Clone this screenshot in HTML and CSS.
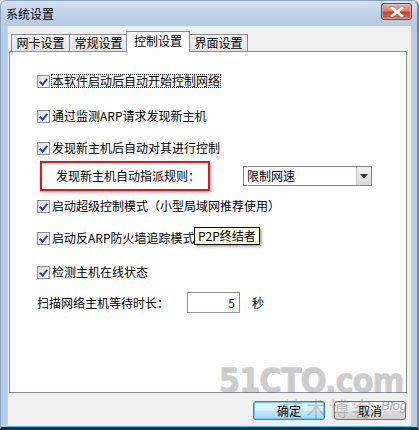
FILE: index.html
```html
<!DOCTYPE html>
<html lang="zh">
<head>
<meta charset="utf-8">
<title>系统设置</title>
<link rel="stylesheet" href="styles.css">
</head>
<body>
<div class="window">
  <div class="titlebar">
    <span class="title">系统设置</span>
    <button class="close" aria-label="关闭">
      <svg width="14" height="10" viewBox="0 0 14 10"><path d="M2 1 L12 9 M12 1 L2 9" stroke="#fff" stroke-width="2.8" stroke-linecap="square"/></svg>
    </button>
  </div>
  <div class="body">
    <div class="tabs">
      <div class="tab">网卡设置</div>
      <div class="tab">常规设置</div>
      <div class="tab active">控制设置</div>
      <div class="tab">界面设置</div>
    </div>
    <div class="panel">
      <label class="row r1"><span class="cb"></span><span class="focus">本软件启动后自动开始控制网络</span></label>
      <label class="row r2"><span class="cb"></span><span>通过监测ARP请求发现新主机</span></label>
      <label class="row r3"><span class="cb"></span><span>发现新主机后自动对其进行控制</span></label>
      <div class="rule-row">
        <div class="redbox">发现新主机自动指派规则：</div>
        <div class="select"><span>限制网速</span><span class="arrow"><svg width="8" height="5" viewBox="0 0 8 5"><path d="M0 0 H8 L4 4.5 Z" fill="#333"/></svg></span></div>
      </div>
      <label class="row r5"><span class="cb"></span><span>启动超级控制模式（小型局域网推荐使用）</span></label>
      <label class="row r6"><span class="cb"></span><span>启动反ARP防火墙追踪模式</span><span class="tooltip">P2P终结者</span></label>
      <label class="row r7"><span class="cb"></span><span>检测主机在线状态</span></label>
      <div class="scan-row">
        <span class="scan-label">扫描网络主机等待时长：</span>
        <span class="input">5</span>
        <span class="unit">秒</span>
      </div>
    </div>
    <div class="buttons">
      <button class="btn default">确定</button>
      <button class="btn">取消</button>
    </div>
    <div class="watermark">
      <div class="wm-big">51CTO.com</div>
      <div class="wm-small">技术博客<i>Blog</i></div>
    </div>
  </div>
</div>
</body>
</html>
```
FILE: styles.css
```css
* { box-sizing: border-box; }
html, body { margin: 0; padding: 0; }
body {
  width: 419px;
  height: 430px;
  overflow: hidden;
  background: #fff;
  font-family: "Noto Sans CJK SC", "Liberation Sans", sans-serif;
  font-size: 12px;
  color: #000;
}
.window {
  width: 419px;
  height: 430px;
  display: flex;
  flex-direction: column;
  background: #b9cde4;
  border-left: 1px solid #8aa4c2;
  border-right: 2px solid #6d86a3;
  border-top: 1px solid #8aa4c2;
  border-radius: 6px 6px 0 0;
  border-bottom: 3px solid #1c2c40;
  position: relative;
  overflow: hidden;
}
.titlebar {
  height: 25px;
  flex: none;
  display: flex;
  align-items: center;
  justify-content: space-between;
  padding: 0 5px 0 5px;
  background: linear-gradient(#d6e3f1, #bfd2e8 50%, #b4c9e3);
}
.title {
  font-size: 12px;
  color: #000;
  line-height: 1;
}
.close {
  width: 31px;
  height: 17px;
  margin-top: -4px;
  border: 1px solid #7b3a33;
  border-radius: 3px;
  background: linear-gradient(#e6a999, #d8836e 45%, #c2432d 55%, #d0715c);
  display: flex;
  align-items: center;
  justify-content: center;
  padding: 0;
  box-shadow: inset 0 0 0 1px rgba(255,255,255,0.35);
}
.body {
  flex: 1;
  background: #f0f0f0;
  margin: 0 5px 0 6px;
  border-left: 1px solid #c4d2e2;
  border-right: 1px solid #c4d2e2;
  border-bottom: 1px solid #39c0e8;
  position: relative;
  padding: 5px 4px 0 1px;
  display: flex;
  flex-direction: column;
}
.tabs {
  display: flex;
  align-items: flex-end;
  height: 20px;
  padding-left: 2px;
}
.tab {
  height: 17px;
  width: 59px;
  border: 1px solid #898c95;
  border-bottom: none;
  background: linear-gradient(#f3f3f3, #e4e4e4);
  display: flex;
  align-items: center;
  justify-content: center;
  line-height: 1;
  margin-right: -1px;
}
.tab.active {
  width: 64px;
  background: #fff;
  position: relative;
  z-index: 1;
  margin: 0 -1px -1px -1px;
  align-items: flex-start;
  padding-top: 3px;
  height: 21px;
}
.panel {
  height: 342px;
  background: #fff;
  border: 1px solid #898c95;
  position: relative;
  display: flex;
  flex-direction: column;
  padding: 22px 0 0 27px;
}
.row {
  display: flex;
  align-items: center;
  height: 14px;
  gap: 2px;
  line-height: 1;
  position: relative;
}
.cb {
  width: 13px;
  height: 13px;
  flex: none;
  border: 1px solid #8f8f8f;
  background: linear-gradient(135deg, #dcdcdc, #f7f7f7);
  position: relative;
}
.cb::after {
  content: "";
  position: absolute;
  left: 3px;
  top: 1px;
  width: 3px;
  height: 6px;
  border-right: 2px solid #2346a8;
  border-bottom: 2px solid #2346a8;
  transform: rotate(40deg);
}
.focus { outline: 1px dotted #000; }
.r2 { margin-top: 21px; }
.r3 { margin-top: 18px; }
.rule-row {
  display: flex;
  align-items: center;
  margin-top: 6px;
  height: 30px;
  margin-left: 3px;
}
.redbox {
  width: 170px;
  height: 30px;
  border: 2px solid #e8141b;
  box-shadow: 1px 1px 3px rgba(0,0,0,0.35);
  display: flex;
  align-items: center;
  padding-left: 14px;
  line-height: 1;
}
.select {
  margin-left: 33px;
  width: 129px;
  height: 20px;
  border: 1px solid #80838d;
  display: flex;
  align-items: center;
  justify-content: space-between;
  padding-left: 3px;
  line-height: 1;
  background: #fff;
}
.arrow {
  width: 15px;
  height: 18px;
  display: flex;
  align-items: center;
  justify-content: center;
  background: linear-gradient(#f2f2f2, #d9d9d9);
  border-left: 1px solid #c7c7c7;
}
.r5 { margin-top: 8px; }
.r6 { margin-top: 18px; }
.r7 { margin-top: 20px; }
.tooltip {
  position: absolute;
  left: 157px;
  top: -4px;
  height: 18px;
  padding: 0 3px;
  background: #ffffe1;
  border: 1px solid #000;
  display: flex;
  align-items: center;
  box-shadow: 2px 2px 2px rgba(0,0,0,0.3);
  line-height: 1;
  white-space: nowrap;
}
.scan-row {
  display: flex;
  align-items: center;
  margin-top: 13px;
  height: 21px;
  line-height: 1;
}
.scan-label { width: 150px; }
.input {
  width: 53px;
  height: 21px;
  border: 1px solid #8e939c;
  display: flex;
  align-items: center;
  justify-content: flex-end;
  padding-right: 4px;
  background: #fff;
}
.unit { margin-left: 12px; }
.buttons {
  display: flex;
  justify-content: flex-end;
  gap: 9px;
  margin-top: 8px;
  padding-right: 1px;
  position: relative;
  z-index: 2;
}
.btn {
  width: 72px;
  height: 19px;
  border: 1px solid #707070;
  border-radius: 3px;
  background: linear-gradient(#f2f2f2 0%, #ebebeb 50%, #dddddd 51%, #cfcfcf 100%);
  font-family: inherit;
  font-size: 12px;
  line-height: 1;
  padding: 0;
  color: #000;
}
.btn.default {
  border-color: #3c7fb1;
  box-shadow: inset 0 0 0 1px #6dd0f4;
  background: linear-gradient(#eaf6fd 0%, #d9f0fc 50%, #bee6fd 51%, #a7d9f5 100%);
}
.watermark {
  position: absolute;
  right: 4px;
  bottom: 7px;
  text-align: right;
  pointer-events: none;
  z-index: 3;
  line-height: 1;
}
.wm-big {
  font-family: "DejaVu Sans Condensed", "Liberation Sans Narrow", "DejaVu Sans", sans-serif;
  font-weight: bold;
  font-size: 34px;
  letter-spacing: -1px;
  color: rgba(205,205,205,0.85);
  text-shadow: 1px 1px 0 rgba(120,120,120,0.4);
  margin-bottom: 2px;
  margin-right: 4px;
}
.wm-small {
  font-size: 20px;
  color: rgba(110,110,110,0.35);
  letter-spacing: 3px;
}
.wm-small i {
  font-family: "Liberation Sans", sans-serif;
  font-size: 13px;
  letter-spacing: 0;
  vertical-align: 7px;
  margin-left: 6px;
  color: rgba(110,110,110,0.5);
}
```
